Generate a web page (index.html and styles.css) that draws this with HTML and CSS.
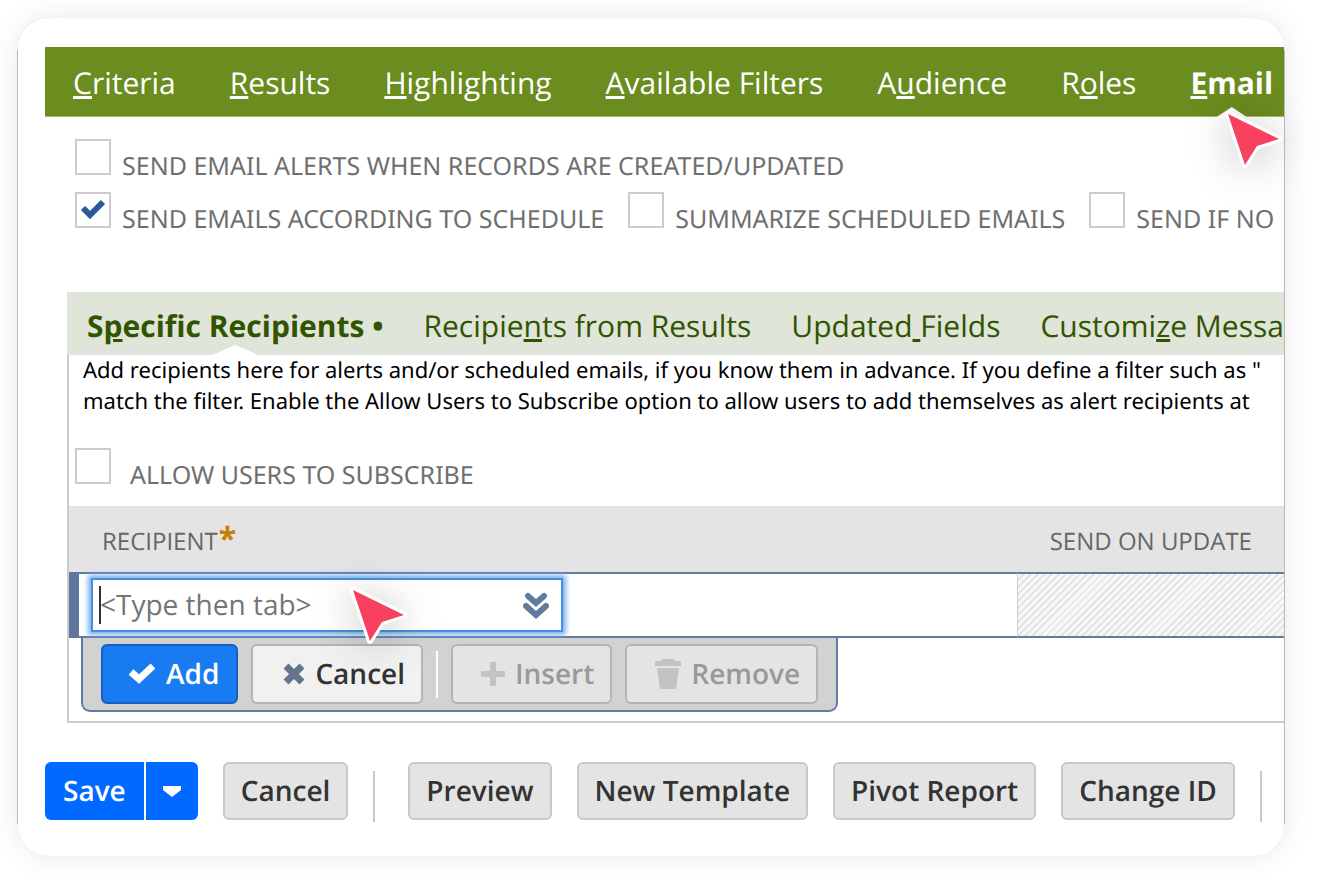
FILE: index.html
```html
<!DOCTYPE html>
<html lang="en">
<head>
  <meta charset="UTF-8" />
  <meta name="viewport" content="width=device-width, initial-scale=1.0"/>
  <title>Saved Search – Email</title>
  <link rel="stylesheet" href="styles.css">
</head>
<body>

  <main class="card">
    <div class="content">

      <nav class="main-tabs">
        <a href="#criteria"><u>C</u>riteria</a>
        <a href="#results"><u>R</u>esults</a>
        <a href="#highlighting"><u>H</u>ighlighting</a>
        <a href="#filters"><u>A</u>vailable Filters</a>
        <a href="#audience">A<u>u</u>dience</a>
        <a href="#roles">R<u>o</u>les</a>
        <a href="#email" class="active"><u>E</u>mail</a>
      </nav>

      <div class="options">
        <div class="option-row">
          <label class="option"><input type="checkbox"> SEND EMAIL ALERTS WHEN RECORDS ARE CREATED/UPDATED</label>
        </div>
        <div class="option-row">
          <label class="option"><input type="checkbox" checked> SEND EMAILS ACCORDING TO SCHEDULE</label>
          <label class="option"><input type="checkbox"> SUMMARIZE SCHEDULED EMAILS</label>
          <label class="option"><input type="checkbox"> SEND IF NO</label>
        </div>
      </div>

      <section class="panel">
        <nav class="sub-tabs">
          <a href="#specific" class="active">S<u>p</u>ecific Recipients •</a>
          <a href="#from-results">Recipie<u>n</u>ts from Results</a>
          <a href="#updated">Updated<u> </u>Fields</a>
          <a href="#message">Customi<u>z</u>e Message</a>
        </nav>

        <div class="panel-body">
          <p class="help">
            Add recipients here for alerts and/or scheduled emails, if you know them in advance. If you define a filter such as "<br>
            match the filter. Enable the Allow Users to Subscribe option to allow users to add themselves as alert recipients at
          </p>

          <label class="option subscribe"><input type="checkbox"> ALLOW USERS TO SUBSCRIBE</label>

          <table class="recipients">
            <thead>
              <tr>
                <th class="col-recipient">RECIPIENT<span class="required">*</span></th>
                <th>SEND ON UPDATE</th>
              </tr>
            </thead>
            <tbody>
              <tr>
                <td class="edit-cell">
                  <div class="combo">
                    <span class="caret"></span>
                    <input type="text" placeholder="&lt;Type then tab&gt;" aria-label="Recipient">
                    <button type="button" class="combo-btn" aria-label="Show list">
                      <svg width="26" height="27" viewBox="0 0 26 27" fill="none" stroke="#5f7b9e" stroke-width="6" stroke-linecap="round">
                        <path d="M5 4l8 7 8-7M3 14l10 9 10-9"/>
                      </svg>
                    </button>
                  </div>
                </td>
                <td class="disabled-cell"></td>
              </tr>
            </tbody>
          </table>

          <div class="row-actions">
            <button type="button" class="btn btn-add">
              <svg width="28" height="22" viewBox="0 0 28 22" fill="none" stroke="#fff" stroke-width="7"><path d="M3 9l8 7L25 3"/></svg>
              Add
            </button>
            <button type="button" class="btn btn-cancel-row">
              <svg width="22" height="22" viewBox="0 0 22 22" fill="none" stroke="#62758c" stroke-width="7"><path d="M3 3l16 16M19 3L3 19"/></svg>
              Cancel
            </button>
            <span class="bar-divider"></span>
            <button type="button" class="btn btn-insert" disabled>
              <svg width="24" height="24" viewBox="0 0 24 24" fill="#c3c3c3"><path d="M9 0h6v9h9v6h-9v9H9v-9H0V9h9z"/></svg>
              Insert
            </button>
            <button type="button" class="btn btn-remove" disabled>
              <svg width="26" height="30" viewBox="0 0 26 30" fill="#c3c3c3"><path d="M0 2h6l2-2h10l2 2h6v5H0zM2 9h22l-3 21H5z"/></svg>
              Remove
            </button>
          </div>
        </div>
      </section>

      <div class="page-actions">
        <div class="split-btn">
          <button type="button" class="save">Save</button>
          <button type="button" class="save-menu" aria-label="More save options">
            <svg width="18" height="12" viewBox="0 0 18 12" fill="#fff"><path d="M0 1h18v4l-9 7-9-7z"/></svg>
          </button>
        </div>
        <button type="button" class="btn">Cancel</button>
        <span class="divider"></span>
        <button type="button" class="btn">Preview</button>
        <button type="button" class="btn">New Template</button>
        <button type="button" class="btn">Pivot Report</button>
        <button type="button" class="btn">Change ID</button>
        <span class="divider last"></span>
      </div>
    </div>

    <!-- pointers that show where to click -->
    <svg class="pointer pointer-email" width="60" height="62" viewBox="0 0 60 62">
      <path d="M4 4l51 25-22 7-12 19z" fill="#f8415f" stroke="#fff" stroke-width="6" stroke-linejoin="round" paint-order="stroke"/>
    </svg>
    <svg class="pointer pointer-recipient" width="60" height="62" viewBox="0 0 60 62">
      <path d="M4 4l51 25-22 7-12 19z" fill="#f8415f" stroke="#fff" stroke-width="6" stroke-linejoin="round" paint-order="stroke"/>
    </svg>
  </main>

</body>
</html>
```
FILE: styles.css
```css
* {
  margin: 0;
  padding: 0;
  box-sizing: border-box;
}

body {
  font-family: 'Open Sans', sans-serif;
  text-rendering: geometricPrecision;
  background: #fff;
  color: #000;
  overflow-x: hidden;
}

a {
  color: inherit;
  text-decoration: none;
}

button, input {
  font: inherit;
  text-rendering: inherit;
}

.card {
  position: relative;
  margin: 18px 39px 18px 18px;
  background: #fff;
  border-radius: 30px;
  box-shadow: 0 0 1px rgba(0, 0, 0, 0.15), 0 0 30px rgba(0, 0, 0, 0.09);
}

/* thin side lines between the rounded corners */
.card::before,
.card::after {
  content: "";
  position: absolute;
  top: 32px;
  bottom: 32px;
  width: 1px;
  background: #b8b8b8;
}

.card::before {
  left: -1px;
}

.card::after {
  right: -1px;
}

.content {
  padding: 29px 0 34px 27px;
  overflow: hidden;
  border-radius: 30px;
  white-space: nowrap;
}

/* Main tabs */
.main-tabs {
  display: flex;
  gap: 54px;
  height: 70px;
  padding: 3px 0 0 28px;
  align-items: center;
  background: #6b8c1f;
  border-bottom: 1px solid #a5bb75;
  color: #fff;
  font-size: 30px;
  line-height: 42px;
}

.main-tabs u,
.sub-tabs u {
  text-decoration-thickness: 3px;
  text-underline-offset: 2px;
}

.active {
  position: relative;
  font-weight: 700;
}

.active::after {
  content: "";
  position: absolute;
  left: 50%;
  bottom: -13px;
  width: 46px;
  height: 10px;
  transform: translateX(-50%);
  background: #fff;
  clip-path: polygon(0 100%, 50% 0, 100% 100%);
}

.main-tabs .active::after {
  width: 30px;
}

/* Checkboxes */
.options {
  display: flex;
  flex-direction: column;
  gap: 9px;
  padding: 22px 0 0 30px;
}

.option-row {
  display: flex;
  gap: 24px;
}

.option {
  display: flex;
  align-items: baseline;
  gap: 11px;
  height: 44px;
  color: #6f6f6f;
  font-family: 'Noto Sans', 'Open Sans', sans-serif;
  font-size: 25px;
  line-height: 36px;
}

.option input {
  appearance: none;
  flex: none;
  width: 36px;
  height: 36px;
  border: 2px solid #ccc;
  background: #fff;
}

.option input:checked {
  background: url("data:image/svg+xml,%3Csvg xmlns='http://www.w3.org/2000/svg' viewBox='0 0 32 32'%3E%3Cpath d='M6 14l7 7L26 8' fill='none' stroke='%232b5a9c' stroke-width='6'/%3E%3C/svg%3E") center / contain no-repeat;
}

/* Recipients panel */
.panel {
  margin: 56px 0 0 22px;
}

.sub-tabs {
  display: flex;
  gap: 40px;
  height: 63px;
  padding: 5px 0 0 20px;
  align-items: center;
  background: #dfe5d9;
  color: #325400;
  font-size: 30px;
  line-height: 40px;
}

.sub-tabs .active::after {
  bottom: -9px;
}

.panel-body {
  border-left: 2px solid #ccc;
  border-bottom: 2px solid #ccc;
  padding-bottom: 9px;
}

.help {
  padding: 0 0 1px 14px;
  font-family: 'Noto Sans', 'Open Sans', sans-serif;
  font-size: 22px;
  line-height: 31px;
}

.subscribe {
  gap: 19px;
  margin: 30px 0 14px 6px;
}

.recipients {
  width: 100%;
  border-collapse: separate;
  border-spacing: 0;
  table-layout: fixed;
}

.recipients th {
  height: 66px;
  padding: 6px 0 0 33px;
  background: #e4e4e4;
  color: #666;
  font-size: 24px;
  font-weight: 400;
  line-height: 34px;
  text-align: left;
}

.col-recipient {
  width: 78%;
}

.required {
  padding-left: 1px;
  color: #c67f00;
  font-size: 32px;
  font-weight: 700;
  line-height: 24px;
}

.recipients td {
  height: 66px;
  border-top: 2px solid #607ba6;
  border-bottom: 2px solid #607ba6;
}

.recipients .edit-cell {
  border-left: 10px solid #5e759c;
  padding-left: 12px;
}

.disabled-cell {
  border-left: 1px solid #ccc;
  background: repeating-linear-gradient(135deg, #f8f8f8 0 3px, #e4e4e4 3px 5px);
}

.combo {
  display: flex;
  align-items: center;
  width: 472px;
  height: 54px;
  padding: 0 12px 0 6px;
  border: 2px solid #4590dc;
  background: #fff;
  box-shadow: 0 0 5px 3px #7ab2ec;
}

.combo input {
  flex: 1;
  min-width: 0;
  border: 0;
  outline: 0;
  background: none;
  font-size: 28px;
}

.combo input::placeholder {
  color: #757575;
}

.caret {
  width: 2px;
  height: 38px;
  margin-right: -1px;
  background: #333;
}

.combo-btn {
  display: flex;
  border: 0;
  background: none;
}

/* Buttons */
.btn {
  height: 58px;
  padding: 0 16px;
  border: 2px solid #c8c8c8;
  border-radius: 6px;
  background: #e4e4e4;
  color: #333;
  font-size: 28px;
  font-weight: 600;
}

.row-actions {
  display: flex;
  align-items: center;
  gap: 13px;
  width: max-content;
  height: 74px;
  margin-left: 12px;
  padding: 0 18px;
  background: #d2d2d2;
  border: 2px solid #607ba6;
  border-top: 0;
  border-radius: 0 0 9px 9px;
}

.row-actions .btn {
  display: flex;
  align-items: center;
  gap: 10px;
  height: 60px;
  padding: 0 16px 0 28px;
  border-color: #b4b4b4;
}

.row-actions .btn-add {
  padding: 0 17px 0 25px;
  border-color: #1560bd;
  background: #187bf2;
  color: #fff;
}

.row-actions .btn-cancel-row {
  padding-left: 30px;
  background: #f1f1f1;
}

.row-actions .btn:disabled {
  color: #999;
}

.bar-divider {
  width: 2px;
  height: 47px;
  background: #fff;
}

.page-actions {
  display: flex;
  gap: 25px;
  margin-top: 39px;
}

.split-btn {
  display: flex;
  gap: 2px;
}

.split-btn button {
  height: 58px;
  border: 0;
  background: #0069ff;
  color: #fff;
  font-size: 28px;
  font-weight: 600;
}

.save {
  padding: 0 18px;
  border-radius: 6px 0 0 6px;
}

.split-btn .save-menu {
  display: flex;
  align-items: center;
  justify-content: center;
  width: 52px;
  border-radius: 0 6px 6px 0;
}

.divider {
  width: 2px;
  height: 51px;
  margin: 9px 8px 0 0;
  background: #c8c8c8;
}

.divider.last {
  margin-right: 0;
}

/* Pointers */
.pointer {
  position: absolute;
  overflow: visible;
  filter: drop-shadow(0 4px 20px rgba(0, 0, 0, 0.25));
}

.pointer-email {
  top: 92px;
  right: 0;
}

.pointer-recipient {
  top: 568px;
  left: 331px;
}
```
